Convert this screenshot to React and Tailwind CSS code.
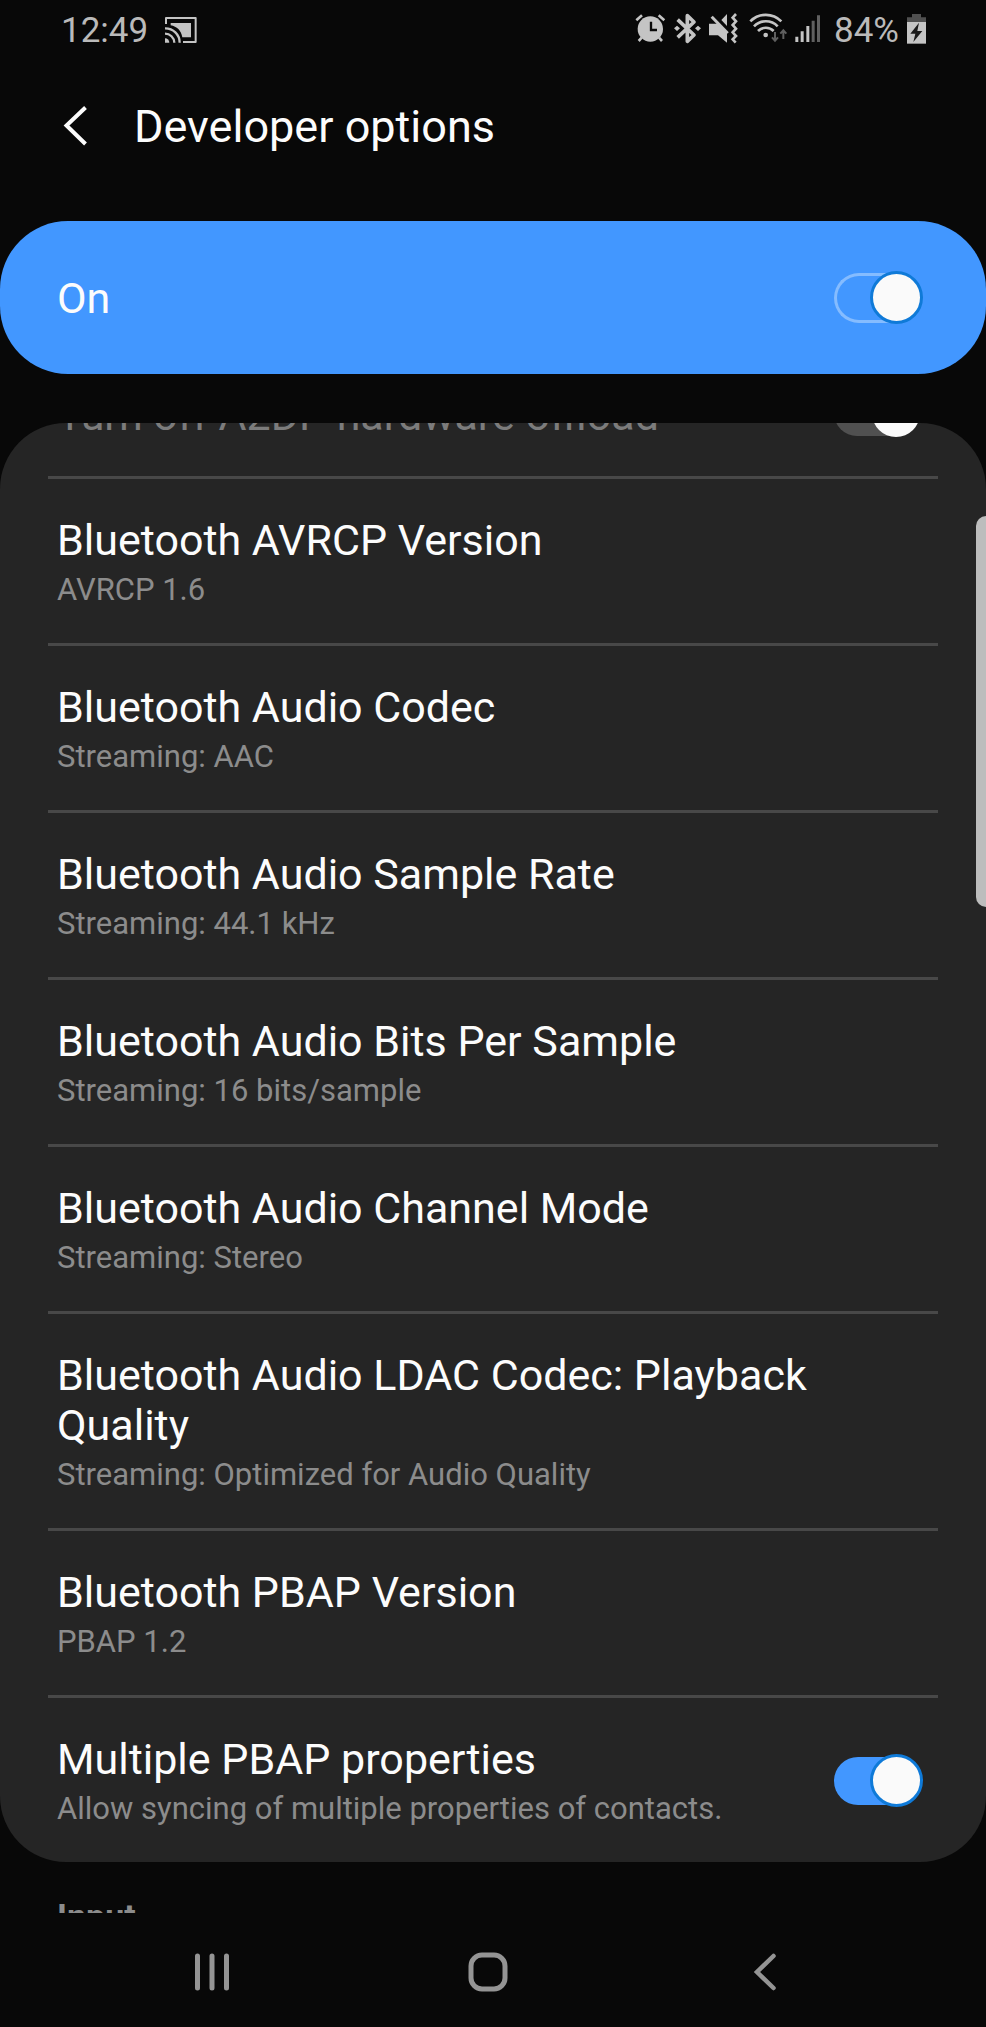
import { useState } from "react";
import clsx from "clsx";

const OPTIONS = [
  { title: "Bluetooth AVRCP Version", summary: "AVRCP 1.6" },
  { title: "Bluetooth Audio Codec", summary: "Streaming: AAC" },
  { title: "Bluetooth Audio Sample Rate", summary: "Streaming: 44.1 kHz" },
  {
    title: "Bluetooth Audio Bits Per Sample",
    summary: "Streaming: 16 bits/sample",
  },
  { title: "Bluetooth Audio Channel Mode", summary: "Streaming: Stereo" },
  {
    title: "Bluetooth Audio LDAC Codec: Playback Quality",
    summary: "Streaming: Optimized for Audio Quality",
  },
  { title: "Bluetooth PBAP Version", summary: "PBAP 1.2" },
];

function CastIcon() {
  return (
    <svg viewBox="498 48 96 78" className="w-8 h-[26px]" fill="none">
      <path
        d="M501 69V51h89v72h-38"
        stroke="#c4c4c4"
        strokeWidth="6"
        strokeLinejoin="round"
      />
      <path d="M515 66h61v43h-26C546 88 534 77 515 73z" fill="#c4c4c4" />
      <path
        d="M498 82a43 43 0 0 1 44 43M498 98a28 28 0 0 1 28 27"
        stroke="#c4c4c4"
        strokeWidth="7"
      />
      <path d="M498 112a13 13 0 0 1 13 13h-13z" fill="#c4c4c4" />
    </svg>
  );
}

function AlarmIcon() {
  return (
    <svg viewBox="45 42 93 96" className="w-[31px] h-8" fill="none">
      <circle cx="91" cy="87" r="38" fill="#c4c4c4" />
      <path
        d="M49 61l17-15M133 61l-17-15M65 113l-9 10M117 113l9 10"
        stroke="#c4c4c4"
        strokeWidth="8"
      />
      <path d="M93 65v25h18" stroke="#080808" strokeWidth="7" />
    </svg>
  );
}

function BluetoothIcon() {
  return (
    <svg viewBox="162 42 81 96" className="w-[27px] h-8 overflow-visible">
      <path
        d="M173 59l49 46-20 19V47l20 19-49 46"
        fill="none"
        stroke="#c4c4c4"
        strokeWidth="11"
        strokeLinejoin="round"
      />
      <path
        d="M162 85l9-8 9 8-9 8zM225 85l9-8 9 8-9 8z"
        fill="#c4c4c4"
      />
    </svg>
  );
}

function MuteVibrateIcon() {
  return (
    <svg viewBox="267 42 87 96" className="w-[29px] h-8 overflow-visible">
      <path
        d="M267 71h28l26 27v30l-27-22h-27zM304 60l17-18v36z"
        fill="#c4c4c4"
      />
      <path
        d="M275 50l48 50"
        fill="none"
        stroke="#c4c4c4"
        strokeWidth="9"
      />
      <path
        d="M348 42l-10 11 10 11-10 11 10 11-10 11 10 11-10 10 9 10"
        fill="none"
        stroke="#c4c4c4"
        strokeWidth="8"
      />
    </svg>
  );
}

function WifiIcon() {
  return (
    <svg viewBox="378 42 123 96" className="w-[41px] h-8 overflow-visible">
      <g fill="none" stroke="#c4c4c4" strokeWidth="8">
        <path d="M391 64a65 65 0 0 1 93 0" />
        <path d="M402 79a49 49 0 0 1 71 0" />
        <path d="M414 93a33 33 0 0 1 47 0" />
      </g>
      <circle cx="437" cy="105" r="7" fill="#c4c4c4" />
      <path
        d="M465 96v25M456 112l9 10 9-10M490 117V92M481 101l9-10 9 10"
        fill="none"
        stroke="#606060"
        strokeWidth="6"
      />
    </svg>
  );
}

function SignalIcon() {
  return (
    <svg viewBox="525 42 93 96" className="w-[31px] h-8">
      <path
        d="M526 110h9v16h-9zM542 94h9v32h-9zM559 78h9v48h-9z"
        fill="#c4c4c4"
      />
      <path d="M575 62h9v64h-9zM591 46h9v80h-9z" fill="#606060" />
    </svg>
  );
}

function BatteryIcon() {
  return (
    <svg viewBox="861 42 57 96" className="w-[19px] h-8">
      <path d="M861 66V52h15V42h27v10h15v14z" fill="#505050" />
      <path d="M861 66h57v65h-57z" fill="#c4c4c4" />
      <path d="M897 68l-26 33h15l-6 25 27-33h-15z" fill="#1a1a1a" />
    </svg>
  );
}

function StatusBar() {
  return (
    <div className="flex h-[60px] shrink-0 items-center justify-between pl-[61px] pr-[60px] text-[35px] leading-[41px] text-[#bababa]">
      <div className="flex items-center gap-[17px]">
        <span>12:49</span>
        <CastIcon />
      </div>
      <div className="flex items-center gap-2">
        <AlarmIcon />
        <BluetoothIcon />
        <MuteVibrateIcon />
        <WifiIcon />
        <SignalIcon />
        <span>84%</span>
        <BatteryIcon />
      </div>
    </div>
  );
}

function Switch({ id, variant = "filled", ...props }) {
  return (
    <input
      id={id}
      type="checkbox"
      role="switch"
      className={clsx(
        "flex h-[54px] w-[88px] shrink-0 appearance-none items-center",
        "before:w-[60px] before:shrink-0 before:rounded-l-full before:content-['']",
        "after:relative after:shrink-0 after:rounded-full after:bg-[#fafafa] after:content-['']",
        variant === "outlined" &&
          "before:h-[50px] before:border-3 before:border-r-0 before:border-[#85bcff]",
        variant === "filled" && "before:h-12 before:bg-[#4297ff]",
        variant === "disabled"
          ? "before:h-[46px] before:bg-[#505050] after:-ml-[22px] after:size-12"
          : "after:-ml-6 after:size-[53px] after:border-3 after:border-[#0f7ad8]",
      )}
      {...props}
    />
  );
}

function Divider() {
  return <div className="mx-12 h-[3px] bg-[#484848]" />;
}

export default function App() {
  const [enabled, setEnabled] = useState(true);
  const [multiplePbap, setMultiplePbap] = useState(true);

  return (
    <div className="flex h-screen flex-col overflow-hidden bg-[#080808] font-[Roboto,sans-serif] text-[#fcfcfc]">
      <StatusBar />

      <header className="flex shrink-0 items-center pt-10 pb-[68px] pl-[62px]">
        <button type="button" aria-label="Navigate up" className="mr-[46px]">
          <svg viewBox="0 0 26 42" className="w-[26px] h-[42px]" fill="none">
            <path
              d="M23.500 1.500L4.500 19.500L23.500 38"
              stroke="#fcfcfc"
              strokeWidth="4"
            />
          </svg>
        </button>
        <h1 className="text-[45px] leading-[53px]">Developer options</h1>
      </header>

      {/* Master switch */}
      <div className="flex h-[153px] shrink-0 items-center justify-between rounded-[68px] bg-[#4297ff] pl-[57px] pr-16">
        <label htmlFor="master" className="text-[43px] leading-[50px]">
          {enabled ? "On" : "Off"}
        </label>
        <Switch
          id="master"
          variant="outlined"
          checked={enabled}
          onChange={(e) => setEnabled(e.target.checked)}
        />
      </div>

      {/* Scrolled list */}
      <main className="relative mt-[49px] min-h-0 flex-1 overflow-hidden rounded-t-[66px]">
        <div className="rounded-b-[66px] bg-[#252525]">
          <div className="flex h-[53px] items-end justify-between overflow-hidden pb-9 pl-[57px] pr-16">
            <label
              htmlFor="a2dp"
              className="text-[43px] leading-[50px] text-[#7c7c7c]"
            >
              Turn off A2DP hardware offload
            </label>
            <Switch id="a2dp" variant="disabled" defaultChecked disabled />
          </div>

          <ul>
            {OPTIONS.map((option) => (
              <li key={option.title}>
                <Divider />
                <button
                  type="button"
                  className="block w-full pt-9 pb-[35px] pl-[57px] pr-16 text-left"
                >
                  <span className="block text-[43px] leading-[50px]">
                    {option.title}
                  </span>
                  <span className="mt-[7px] block text-[31px] leading-9 text-[#8c8c8c]">
                    {option.summary}
                  </span>
                </button>
              </li>
            ))}
            <li>
              <Divider />
              <div className="flex items-center justify-between pt-9 pb-[35px] pl-[57px] pr-16">
                <label htmlFor="pbap">
                  <span className="block text-[43px] leading-[50px]">
                    Multiple PBAP properties
                  </span>
                  <span className="mt-[7px] block text-[31px] leading-9 text-[#8c8c8c]">
                    Allow syncing of multiple properties of contacts.
                  </span>
                </label>
                <Switch
                  id="pbap"
                  checked={multiplePbap}
                  onChange={(e) => setMultiplePbap(e.target.checked)}
                />
              </div>
            </li>
          </ul>
        </div>

        <h2 className="pt-[34px] pl-[57px] text-[34px] leading-10 font-bold text-[#8c8c8c]">
          Input
        </h2>

        {/* Scroll thumb */}
        <div className="absolute top-[93px] right-0 h-[391px] w-2.5 rounded-l-[10px] bg-[#bdbdbd]" />
      </main>

      <nav className="grid h-[114px] shrink-0 grid-cols-3 pt-1 pl-[74px] pr-[83px]">
        <button
          type="button"
          aria-label="Recents"
          className="flex items-center justify-center"
        >
          <svg viewBox="0 0 40 40" className="size-10">
            <path
              d="M5.500 4v32M20 4v32M34.500 4v32"
              stroke="#949494"
              strokeWidth="5"
              strokeLinecap="round"
            />
          </svg>
        </button>
        <button
          type="button"
          aria-label="Home"
          className="flex items-center justify-center"
        >
          <svg viewBox="0 0 40 40" className="size-10">
            <rect
              x="3"
              y="3"
              width="34"
              height="34"
              rx="11"
              fill="none"
              stroke="#949494"
              strokeWidth="5"
            />
          </svg>
        </button>
        <button
          type="button"
          aria-label="Back"
          className="flex items-center justify-center"
        >
          <svg viewBox="0 0 40 40" className="size-10">
            <path
              d="M28.500 4L12 20l16.500 16"
              fill="none"
              stroke="#949494"
              strokeWidth="4.500"
              strokeLinecap="round"
            />
          </svg>
        </button>
      </nav>
    </div>
  );
}
